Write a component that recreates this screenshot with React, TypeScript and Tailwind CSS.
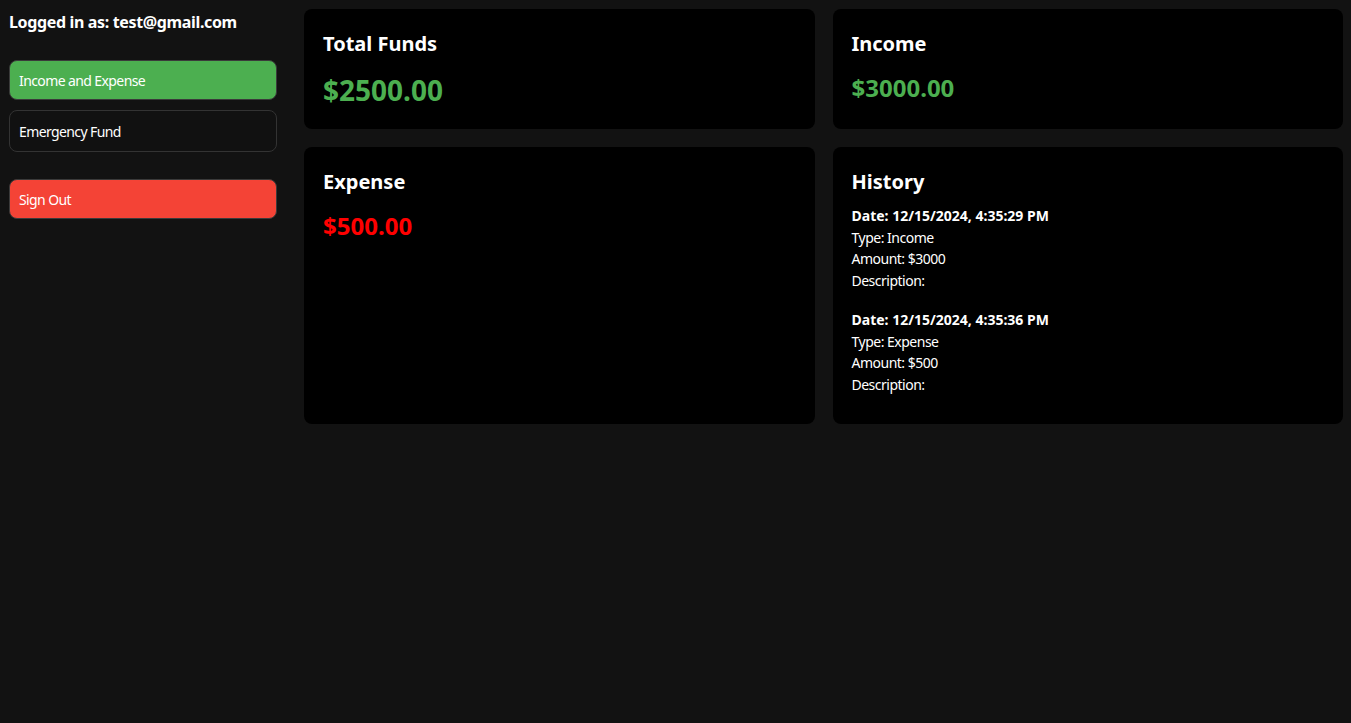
const font = { fontFamily: '"Segoe UI", "Noto Sans", sans-serif' };

const history = [
  { date: '12/15/2024, 4:35:29 PM', type: 'Income', amount: 3000, description: '' },
  { date: '12/15/2024, 4:35:36 PM', type: 'Expense', amount: 500, description: '' },
];

function Card({ children, pb = 'pb-[22px]' }: { children: React.ReactNode; pb?: string }) {
  return <div className={`rounded-lg bg-black px-[19px] pt-[23px] ${pb}`}>{children}</div>;
}

export default function App() {
  return (
    <div className="flex min-h-[723px] bg-[#121212] text-white" style={font}>
      <aside className="w-[287px] shrink-0 px-[9px] pt-[11px]">
        <h3 className="text-[16px] font-bold leading-[22px] tracking-[-0.35px]">Logged in as: test@gmail.com</h3>

        <div className="mt-[27px] flex flex-col gap-[10px]">
          <button className="h-[40px] w-[268px] rounded-lg border border-[#3a3a3a] bg-[#4caf50] px-[9px] text-left text-[14px] tracking-[-0.6px]">
            Income and Expense
          </button>
          <button className="h-[42px] w-[268px] rounded-lg border border-[#333] bg-[#111111] px-[9px] text-left text-[14px] tracking-[-0.6px]">
            Emergency Fund
          </button>
        </div>

        <button className="mt-[27px] h-[40px] w-[268px] rounded-lg border border-[#3a3a3a] bg-[#f44336] px-[9px] text-left text-[14px] tracking-[-0.6px]">
          Sign Out
        </button>
      </aside>

      <main className="grid flex-1 grid-cols-2 content-start gap-[18px] pt-[9px] pr-[8px] pl-[17px]">
        <Card>
          <h2 className="text-[20px] font-bold leading-[24px]">Total Funds</h2>
          <p className="mt-[17px] text-[28px] font-bold leading-[34px] text-[#4caf50]">$2500.00</p>
        </Card>
        <Card>
          <h2 className="text-[20px] font-bold leading-[24px]">Income</h2>
          <p className="mt-[17px] text-[24px] font-bold leading-[30px] text-[#4caf50]">$3000.00</p>
        </Card>
        <Card>
          <h2 className="text-[20px] font-bold leading-[24px]">Expense</h2>
          <p className="mt-[17px] text-[24px] font-bold leading-[30px] text-[#ff0000]">$500.00</p>
        </Card>
        <Card pb="pb-[28px]">
          <h2 className="text-[20px] font-bold leading-[24px]">History</h2>
          <ul className="mt-[11px] flex flex-col gap-[17px] text-[14px] leading-[21.7px]">
            {history.map((h) => (
              <li key={h.date}>
                <p className="font-bold">Date: {h.date}</p>
                <p className="tracking-[-0.5px]">Type: {h.type}</p>
                <p className="tracking-[-0.5px]">Amount: ${h.amount}</p>
                <p className="tracking-[-0.5px]">Description: {h.description}</p>
              </li>
            ))}
          </ul>
        </Card>
      </main>
    </div>
  );
}
